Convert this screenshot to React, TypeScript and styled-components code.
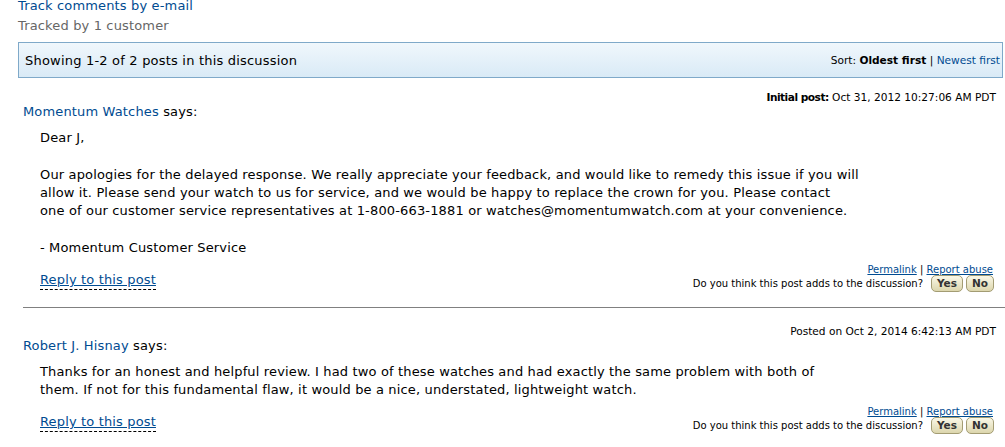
import React from "react";
import styled, { createGlobalStyle } from "styled-components";

const GlobalStyle = createGlobalStyle`
  body {
    margin: 0;
    background: #fff;
    font-family: "DejaVu Sans", Verdana, sans-serif;
    color: #000;
  }
`;

const Page = styled.div`
  width: 985px;
  padding-left: 18px;
  margin-top: -4px;
`;

const TrackLink = styled.a`
  display: block;
  font-size: 13px;
  line-height: 20px;
  letter-spacing: 0.15px;
  color: #004b91;
  text-decoration: none;
`;

const Tracked = styled.div`
  font-size: 13px;
  line-height: 20px;
  letter-spacing: 0.15px;
  color: #666;
`;

const HeaderBar = styled.div`
  margin-top: 6px;
  height: 36px;
  box-sizing: border-box;
  border: 1px solid #7fa9c9;
  background: linear-gradient(#f0f7fc, #d9eaf6);
  display: flex;
  align-items: center;
  justify-content: space-between;
  padding: 0 2px 0 6px;
`;

const Showing = styled.span`
  font-size: 13px;
  letter-spacing: 0.2px;
`;

const Sort = styled.span`
  font-size: 10.6px;
`;

const Link = styled.a`
  color: #004b91;
  text-decoration: none;
`;

const UnderLink = styled.a`
  color: #004b91;
  text-decoration: underline;
`;

const Post = styled.div<{ $first?: boolean }>`
  padding-top: ${(p) => (p.$first ? "12px" : "16px")};
`;

const Meta = styled.div`
  font-size: 10.6px;
  line-height: 14px;
  text-align: right;
  padding-right: 7px;
`;

const MetaLabel = styled.b`
  letter-spacing: -0.5px;
`;

const Author = styled.div`
  font-size: 13px;
  line-height: 16px;
  letter-spacing: 0.15px;
  padding-left: 5px;
`;

const Body = styled.div`
  font-size: 13px;
  line-height: 18px;
  letter-spacing: 0.15px;
  width: 840px;
  padding-left: 22px;
  margin-top: 9px;
`;

const Para = styled.p`
  margin: 0 0 19px;
  &:last-child {
    margin-bottom: 0;
  }
`;

const Footer = styled.div`
  display: flex;
  justify-content: space-between;
  align-items: flex-end;
  margin-top: 6px;
  padding-right: 9px;
`;

const Reply = styled.a`
  margin-left: 22px;
  margin-bottom: 2px;
  font-size: 13px;
  line-height: 16px;
  letter-spacing: 0.15px;
  color: #004b91;
  text-decoration: underline;
  border-bottom: 1px dashed #000;
  padding-bottom: 1px;
`;

const Actions = styled.div`
  display: flex;
  flex-direction: column;
  align-items: flex-end;
  font-size: 10px;
`;

const ActionLinks = styled.div`
  line-height: 13px;
  padding-right: 1px;
`;

const Vote = styled.div`
  display: flex;
  align-items: center;
  gap: 3px;
  margin-top: -1px;
`;

const Question = styled.span`
  margin-right: 5px;
`;

const VoteButton = styled.button`
  font-family: "DejaVu Sans", Verdana, sans-serif;
  font-size: 10.5px;
  font-weight: bold;
  color: #333;
  height: 17px;
  padding: 0 5px;
  line-height: 15px;
  border: 1px solid #a39c73;
  border-radius: 5px;
  background: linear-gradient(#faf8e8, #dcd6ad);
`;

const Divider = styled.hr`
  margin: 15px 0 0 5px;
  border: none;
  border-top: 1px solid #808080;
  width: calc(100% + 20px);
`;

const PostFooter = () => (
  <Footer>
    <Reply href="#">Reply to this post</Reply>
    <Actions>
      <ActionLinks>
        <UnderLink href="#">Permalink</UnderLink> |{" "}
        <UnderLink href="#">Report abuse</UnderLink>
      </ActionLinks>
      <Vote>
        <Question>Do you think this post adds to the discussion?</Question>
        <VoteButton>Yes</VoteButton>
        <VoteButton>No</VoteButton>
      </Vote>
    </Actions>
  </Footer>
);

export default function App() {
  return (
    <>
      <GlobalStyle />
      <Page>
        <TrackLink href="#">Track comments by e-mail</TrackLink>
        <Tracked>Tracked by 1 customer</Tracked>
        <HeaderBar>
          <Showing>Showing 1-2 of 2 posts in this discussion</Showing>
          <Sort>
            Sort: <b>Oldest first</b> | <Link href="#">Newest first</Link>
          </Sort>
        </HeaderBar>

        <Post $first>
          <Meta>
            <MetaLabel>Initial post:</MetaLabel> Oct 31, 2012 10:27:06 AM PDT
          </Meta>
          <Author>
            <Link href="#">Momentum Watches</Link> says:
          </Author>
          <Body>
            <Para>Dear J,</Para>
            <Para>
              Our apologies for the delayed response. We really appreciate your
              feedback, and would like to remedy this issue if you will
              <br />
              allow it. Please send your watch to us for service, and we would
              be happy to replace the crown for you. Please contact
              <br />
              one of our customer service representatives at 1-800-663-1881 or
              watches@momentumwatch.com at your convenience.
            </Para>
            <Para>- Momentum Customer Service</Para>
          </Body>
          <PostFooter />
        </Post>

        <Divider />

        <Post>
          <Meta>Posted on Oct 2, 2014 6:42:13 AM PDT</Meta>
          <Author>
            <Link href="#">Robert J. Hisnay</Link> says:
          </Author>
          <Body>
            <Para>
              Thanks for an honest and helpful review. I had two of these
              watches and had exactly the same problem with both of
              <br />
              them. If not for this fundamental flaw, it would be a nice,
              understated, lightweight watch.
            </Para>
          </Body>
          <PostFooter />
        </Post>
      </Page>
    </>
  );
}
